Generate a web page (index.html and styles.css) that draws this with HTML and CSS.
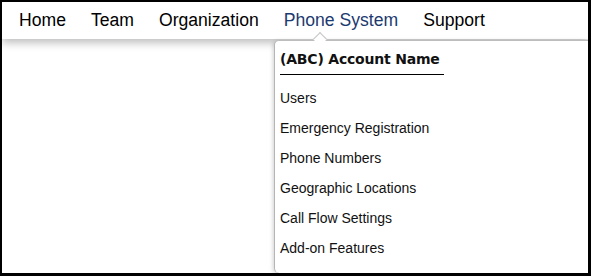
FILE: index.html
```html
<!DOCTYPE html>
<html lang="en">
<head>
  <meta charset="UTF-8">
  <title>Phone System Menu</title>
  <link rel="stylesheet" href="styles.css">
</head>
<body>

<div class="frame">
  <!-- Top navigation -->
  <nav class="topnav">
    <a class="nav-link" href="#">Home</a>
    <a class="nav-link" href="#">Team</a>
    <a class="nav-link" href="#">Organization</a>
    <a class="nav-link active" href="#">Phone System</a>
    <a class="nav-link" href="#">Support</a>
  </nav>

  <!-- Dropdown for Phone System -->
  <div class="dropdown">
    <span class="caret"></span>
    <div class="account-name">(ABC) Account Name</div>
    <ul class="menu-list">
      <li><a href="#">Users</a></li>
      <li><a href="#">Emergency Registration</a></li>
      <li><a href="#">Phone Numbers</a></li>
      <li><a href="#">Geographic Locations</a></li>
      <li><a href="#">Call Flow Settings</a></li>
      <li><a href="#">Add-on Features</a></li>
    </ul>
  </div>
</div>

</body>
</html>
```

FILE: styles.css
```css
* { box-sizing: border-box; }

body {
  margin: 0;
  background: #000;
  font-family: "Liberation Sans", Arial, sans-serif;
}

.frame {
  margin: 2px 3px 3px 2px;
  height: 271px;
  background: white;
  position: relative;
  overflow: hidden;
}

.topnav {
  height: 37px;
  display: flex;
  align-items: center;
  gap: 25px;
  padding-left: 17px;
  background: white;
  box-shadow: 0 4px 8px rgba(0,0,0,0.25);
  position: relative;
  z-index: 1;
}

.nav-link {
  font-size: 17.6px;
  color: #000;
  text-decoration: none;
}

.nav-link.active {
  color: #1c3a70;
}

.dropdown {
  position: absolute;
  left: 272px;
  top: 38px;
  right: 0;
  bottom: 0;
  background: white;
  border-top: 1px solid #bdbdbd;
  border-left: 1px solid #b5b5b5;
  border-radius: 5px 0 0 5px;
  box-shadow: -1px 1px 4px rgba(0,0,0,0.18);
  padding: 9px 0 0 5px;
  z-index: 2;
}

.caret {
  position: absolute;
  left: 40px;
  top: -7px;
  width: 10px;
  height: 10px;
  background: white;
  border-top: 1px solid #c4c4c4;
  border-left: 1px solid #c4c4c4;
  transform: rotate(45deg);
}

.account-name {
  width: fit-content;
  font-family: "DejaVu Sans", Verdana, sans-serif;
  font-weight: bold;
  font-size: 14px;
  line-height: 18px;
  letter-spacing: -0.2px;
  color: #111;
  padding: 0 4px 6px 0;
  border-bottom: 1px solid #000;
}

.menu-list {
  list-style: none;
  margin: 8px 0 0 0;
  padding: 0;
}

.menu-list li {
  font-size: 14px;
  line-height: 30px;
}

.menu-list a {
  color: #111;
  text-decoration: none;
}
```
